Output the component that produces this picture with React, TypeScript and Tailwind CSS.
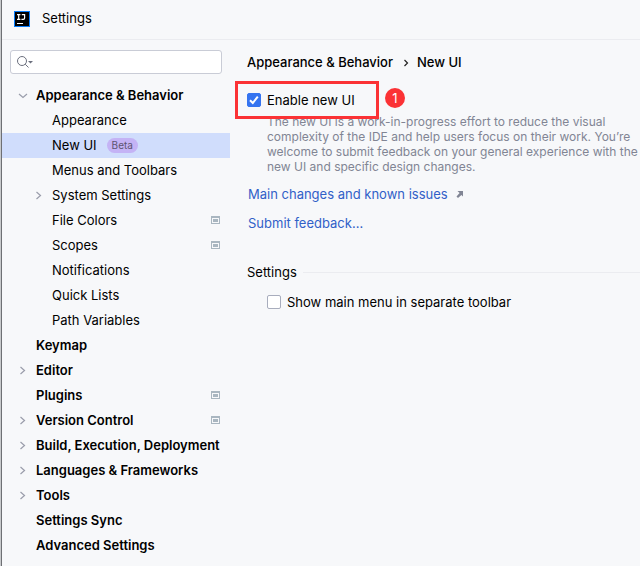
import React from 'react';

type Item = {
  label: string;
  level: 0 | 1;
  arrow?: 'open' | 'closed';
  beta?: boolean;
  project?: boolean;
  selected?: boolean;
};

const items: Item[] = [
  { label: 'Appearance & Behavior', level: 0, arrow: 'open' },
  { label: 'Appearance', level: 1 },
  { label: 'New UI', level: 1, beta: true, selected: true },
  { label: 'Menus and Toolbars', level: 1 },
  { label: 'System Settings', level: 1, arrow: 'closed' },
  { label: 'File Colors', level: 1, project: true },
  { label: 'Scopes', level: 1, project: true },
  { label: 'Notifications', level: 1 },
  { label: 'Quick Lists', level: 1 },
  { label: 'Path Variables', level: 1 },
  { label: 'Keymap', level: 0 },
  { label: 'Editor', level: 0, arrow: 'closed' },
  { label: 'Plugins', level: 0, project: true },
  { label: 'Version Control', level: 0, arrow: 'closed', project: true },
  { label: 'Build, Execution, Deployment', level: 0, arrow: 'closed' },
  { label: 'Languages & Frameworks', level: 0, arrow: 'closed' },
  { label: 'Tools', level: 0, arrow: 'closed' },
  { label: 'Settings Sync', level: 0 },
  { label: 'Advanced Settings', level: 0 },
];

function Logo() {
  return (
    <svg className="w-4 h-4" viewBox="0 0 16 16" aria-hidden="true">
      <rect width="16" height="16" fill="#087cfa" />
      <rect x="1" y="1" width="14" height="14" fill="#000" />
      <path d="M3 3.6h3.4M4.7 3.5v5M3 8.4h3.4M7.8 3.6h2.8v3.4q0 1.4-1.4 1.4H7.4" fill="none" stroke="#fff" strokeWidth="1.2" />
      <path d="M3 12.5h6" stroke="#fff" />
    </svg>
  );
}

function Arrow({ type }: { type?: 'open' | 'closed' }) {
  return (
    <span className="w-4 h-4 shrink-0">
      {type && (
        <svg className="w-4 h-4" viewBox="0 0 16 16" fill="none" stroke="#9a9dab" strokeWidth="1.2" aria-hidden="true">
          <path d={type === 'open' ? 'M3 6L7 9.5L11 6' : 'M4.5 4L8.5 7.5L4.5 11'} />
        </svg>
      )}
    </span>
  );
}

function ProjectIcon() {
  return (
    <svg className="w-[9px] h-[9px] ml-auto shrink-0" viewBox="0 0 9 9" fill="#a9b6c0" aria-hidden="true">
      <path fillRule="evenodd" d="M0 0h9v8H0zM1 2v5h7V2z" />
      <rect x="2" y="3" width="5" height="3" />
    </svg>
  );
}

function Checkbox({ id, defaultChecked }: { id: string; defaultChecked?: boolean }) {
  return (
    <span className="relative flex w-3.5 h-3.5 shrink-0">
      <input
        id={id}
        type="checkbox"
        defaultChecked={defaultChecked}
        className="peer appearance-none w-3.5 h-3.5 rounded-[2px] border border-[#a8adbd] bg-white checked:border-[#3574f0] checked:bg-[#3574f0]"
      />
      <svg
        className="absolute inset-0 w-3.5 h-3.5 pointer-events-none hidden peer-checked:block"
        viewBox="0 0 14 14"
        fill="none"
        stroke="#fff"
        strokeWidth="2"
        aria-hidden="true"
      >
        <path d="M3 7.2L5.8 10L10.8 3.6" />
      </svg>
    </span>
  );
}

function Sidebar() {
  return (
    <aside className="w-[228px] shrink-0 pt-2.5">
      <div className="ml-2 mr-2 mb-[9px] h-6 flex items-center gap-1 pl-1.5 rounded-[3px] border border-[#c9ccd6] bg-white">
        <svg className="w-4 h-3.5 shrink-0" viewBox="0 0 16 14" fill="none" stroke="#6c707e" aria-hidden="true">
          <circle cx="5" cy="6" r="4.5" />
          <path d="M8.2 9.2L11.5 12.5" />
          <path d="M11 6h5L13.5 8.5z" fill="#6c707e" stroke="none" />
        </svg>
        <input type="text" aria-label="Search settings" className="min-w-0 flex-1 bg-transparent outline-none" />
      </div>
      <nav>
        {items.map((item) => (
          <button
            key={item.label}
            type="button"
            className={`flex items-center w-full h-[25px] pr-2.5 text-left whitespace-nowrap ${
              item.level === 0 ? 'pl-3.5 font-semibold' : 'pl-[30px]'
            } ${item.selected ? 'bg-[#d0ddfc]' : ''}`}
          >
            <Arrow type={item.arrow} />
            <span className="ml-1">{item.label}</span>
            {item.beta && (
              <span className="ml-2.5 px-[5px] h-[15px] rounded-full bg-[#c4b3f5] text-[#5c5470] text-[10px] leading-[15px]">
                Beta
              </span>
            )}
            {item.project && <ProjectIcon />}
          </button>
        ))}
      </nav>
    </aside>
  );
}

function Content() {
  return (
    <main className="flex-1 min-w-0 pl-[17px] pt-[13px]">
      <div className="flex items-center h-5 font-medium">
        <span>Appearance & Behavior</span>
        <svg className="w-1.5 h-2 ml-2.5 mr-2" viewBox="0 0 6 8" fill="none" stroke="#222" strokeWidth="1.2" aria-hidden="true">
          <path d="M1.5 1L4.5 4L1.5 7" />
        </svg>
        <span>New UI</span>
      </div>

      <div className="relative flex items-center h-5 mt-[17px]">
        <Checkbox id="enable-new-ui" defaultChecked />
        <label htmlFor="enable-new-ui" className="pl-1.5 pt-0.5">Enable new UI</label>
        <div className="absolute -left-3 -top-[9px] w-36 h-[38px] border-3 border-[#fb3235] pointer-events-none"></div>
        <span className="absolute left-[138px] -top-0.5 w-5 h-5 rounded-full bg-[#fb3235] text-white text-center leading-5">
          1
        </span>
      </div>

      <p className="mt-1 pl-5 text-xs leading-[15px] text-[#818594]">
        The new UI is a work-in-progress effort to reduce the visual complexity of the IDE and help users focus on
        their work. You’re welcome to submit feedback on your general experience with the new UI and specific design
        changes.
      </p>

      <div className="flex flex-col items-start gap-[9px] mt-2.5 pl-px leading-5 text-[#3160c8]">
        <a href="#" className="flex items-center gap-2">
          Main changes and known issues
          <svg className="w-2 h-2" viewBox="0 0 8 8" fill="#818594" aria-hidden="true">
            <path d="M1.5 1H7v5.5L5.4 4.9L2 8L0.5 6.6L3.6 3.1z" />
          </svg>
        </a>
        <a href="#">Submit feedback…</a>
      </div>

      <section className="mt-[29px]">
        <div className="flex items-center gap-1.5 leading-5">
          <h2>Settings</h2>
          <div className="flex-1 h-px bg-[#ebecf0]"></div>
        </div>
        <div className="flex items-center h-5 mt-2.5 pl-5">
          <Checkbox id="main-menu" />
          <label htmlFor="main-menu" className="pl-1.5 pt-0.5">Show main menu in separate toolbar</label>
        </div>
      </section>
    </main>
  );
}

export default function App() {
  return (
    <div className="min-h-screen flex flex-col overflow-hidden border-l border-[#c8cacc] bg-[#f7f8fa] font-['Inter',sans-serif] text-[13px] text-black">
      <div className="flex-1 flex flex-col border-l border-[#6e7074]">
        <header className="flex items-center gap-3 h-10 pl-3 pb-px border-b border-[#ebecf0]">
          <Logo />
          <h1>Settings</h1>
        </header>
        <div className="flex flex-1">
          <Sidebar />
          <Content />
        </div>
      </div>
    </div>
  );
}
